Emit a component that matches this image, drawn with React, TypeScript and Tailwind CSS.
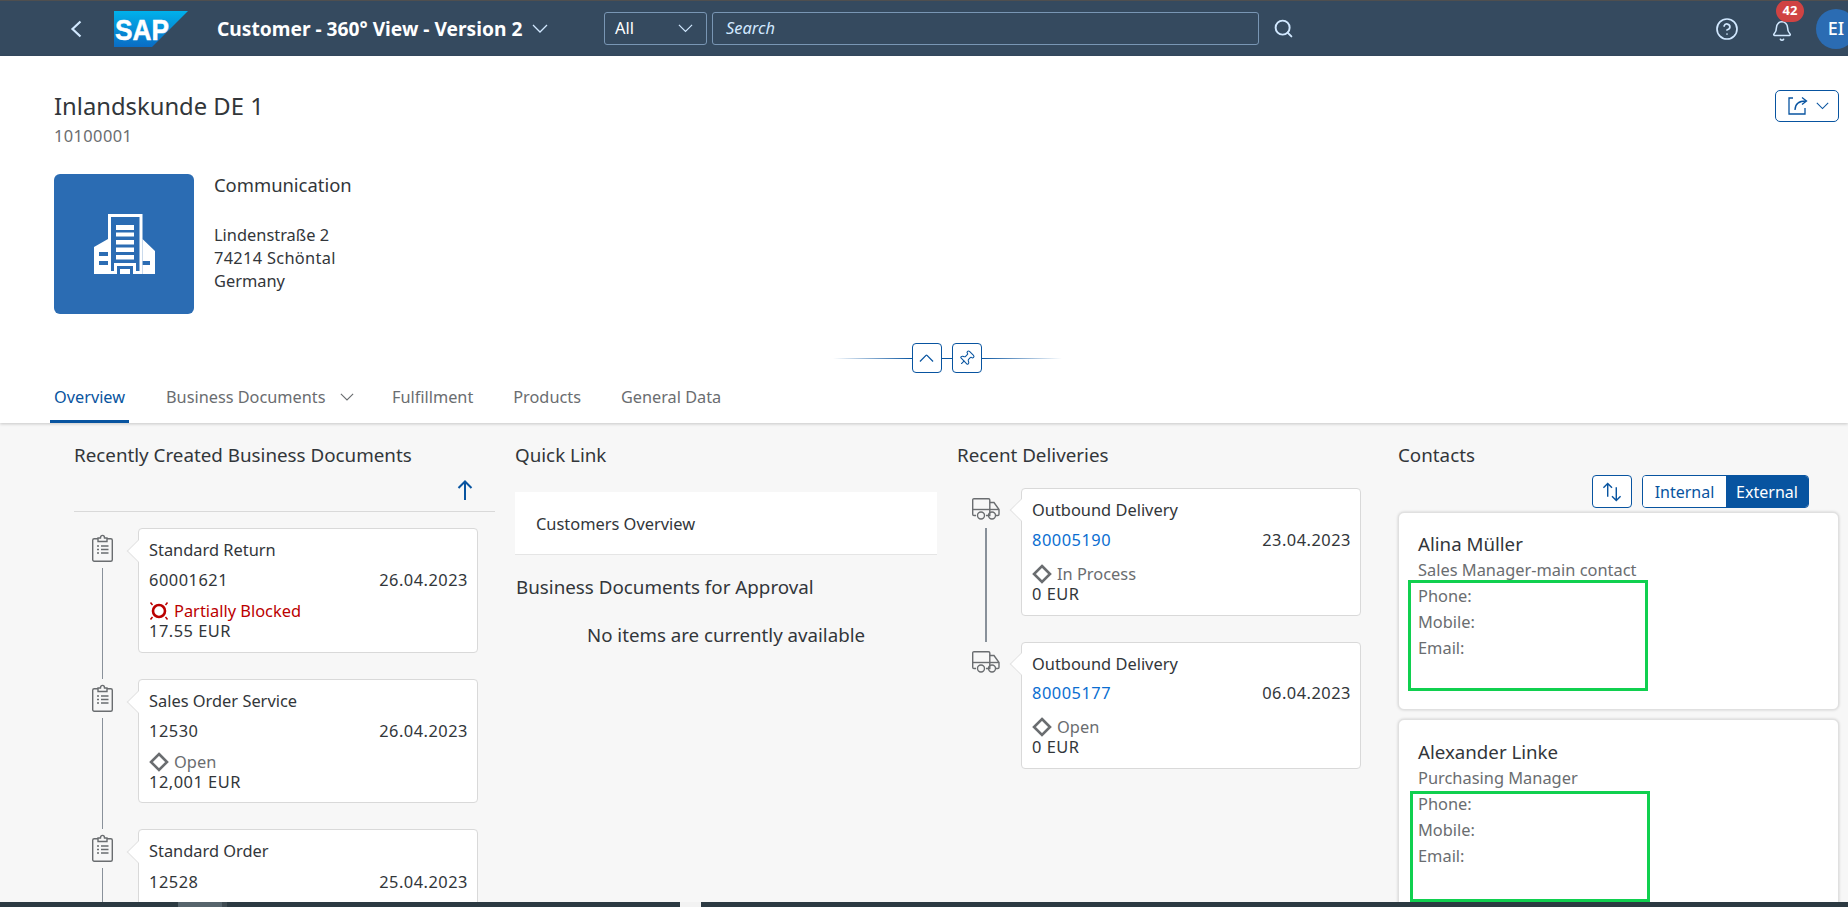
import { CircleHelp, Bell, Pin, Search } from "lucide-react";
import type { ReactNode } from "react";

function Caret({ className }: { className: string }) {
  return (
    <svg viewBox="0 0 16 9" fill="none" stroke="currentColor" strokeWidth="1.300" className={className}>
      <path d="M1 1l7 7 7-7" />
    </svg>
  );
}

function SapLogo() {
  return (
    <svg width="74" height="36" viewBox="0 0 74 36" className="ml-[32px] shrink-0">
      <defs>
        <linearGradient id="sapFill" x1="0" y1="0" x2="0" y2="1">
          <stop offset="0" stopColor="#00b1eb" />
          <stop offset="1" stopColor="#0a6cc4" />
        </linearGradient>
      </defs>
      <polygon points="0,0 74,0 38,36 0,36" fill="url(#sapFill)" />
      <text
        x="1"
        y="29"
        fill="#ffffff"
        stroke="#ffffff"
        strokeWidth=".5"
        fontFamily="'Liberation Sans', sans-serif"
        fontWeight="700"
        fontSize="30"
        textLength="54"
        lengthAdjust="spacingAndGlyphs"
      >
        SAP
      </text>
    </svg>
  );
}

function BuildingIcon() {
  return (
    <svg width="61" height="60" viewBox="0 0 61 60" fill="#ffffff">
      <path d="M14 0h34.500v60H39V52H23v8h-9zM17 3v54h3V49h22v8h3.500V3z" fillRule="evenodd" />
      <rect x="22" y="11" width="18" height="5" />
      <rect x="22" y="18.500" width="18" height="4" />
      <rect x="22" y="26" width="18" height="4.500" />
      <rect x="22" y="33.500" width="18" height="4.500" />
      <rect x="22" y="41" width="18" height="4.500" />
      <path d="M26 55h10v5H26z" />
      <path d="M14 25 0 33v27h14V51H5v-4h9v-5H5v-4h9z" />
      <path d="M48.500 25 61 37v23H48.500v-9H56v-4h-7.500z" />
    </svg>
  );
}

function ShareIcon() {
  return (
    <svg width="20" height="18" viewBox="0 0 20 18" fill="none" stroke="#0854a0" strokeWidth="1.300">
      <path d="M5 1H1v16h16v-6" />
      <path d="M7 13C7 7 11 4 18 4" />
      <path d="M14 .5 18.500 4 14 7.500" />
    </svg>
  );
}

function SortIcon() {
  return (
    <svg width="20" height="20" viewBox="0 0 21 20" fill="none" stroke="#0854a0" strokeWidth="1.500">
      <path d="M6 1v14M1.500 5.500 6 1l4.500 4.500" />
      <path d="M15 5v14M10.500 14.500 15 19l4.500-4.500" />
    </svg>
  );
}

function ClipboardIcon() {
  return (
    <svg width="21" height="28" viewBox="0 0 21 28" fill="none" stroke="#6a6d70" strokeWidth="1.400" className="shrink-0">
      <rect x=".7" y="4.700" width="19.600" height="22.600" rx="1.500" />
      <path d="M6 7.500V4h2.500c0-3.500 4-3.500 4 0H15v3.500z" fill="#f7f7f7" />
      <path d="M9 12h7.500M9 15.500h7.500M9 19h7.500" />
      <path d="M5 12h2M5 15.500h2M5 19h2" />
    </svg>
  );
}

function TruckIcon() {
  return (
    <svg width="28" height="22" viewBox="0 0 28 22" fill="none" stroke="#6a6d70" strokeWidth="1.400" className="shrink-0">
      <path d="M4 17.500H2a1.300 1.300 0 0 1-1.300-1.300V2A1.300 1.300 0 0 1 2 .7h14.500c.7 0 1.300.6 1.300 1.300v15.500H14" />
      <path d="M.7 11.500h17.100" />
      <path d="M17.800 4.500h4.200l5 7v4.700a1.300 1.300 0 0 1-1.300 1.300H24" />
      <path d="M17.800 11.500H27" />
      <circle cx="9" cy="17.500" r="3.500" />
      <circle cx="20" cy="17.500" r="3.500" />
    </svg>
  );
}

function BlockedIcon() {
  return (
    <svg width="20" height="20" viewBox="0 0 20 20" fill="none" stroke="#bb0000" className="shrink-0">
      <circle cx="10" cy="10" r="6" strokeWidth="2.600" />
      <path d="M1.500 1.500 3.500 4M18.500 1.500 16.500 4M1.500 18.500 3.500 16M18.500 18.500 16.500 16" strokeWidth="1.500" />
    </svg>
  );
}

function DiamondIcon() {
  return (
    <svg width="20" height="20" viewBox="0 0 20 20" fill="none" stroke="#6a6d70" strokeWidth="2.600" className="shrink-0">
      <path d="M10 2 18 10 10 18 2 10z" />
    </svg>
  );
}

function StatusLine({ blocked, text }: { blocked?: boolean; text: string }) {
  return (
    <div className={blocked ? "flex h-5 items-center gap-[5px] text-[#bb0000]" : "flex h-5 items-center gap-[5px] text-[#6a6d70]"}>
      {blocked ? <BlockedIcon /> : <DiamondIcon />}
      <span>{text}</span>
    </div>
  );
}

function FlowCard(props: {
  title: string;
  number: string;
  date: string;
  link?: boolean;
  blocked?: boolean;
  status?: string;
  amount?: string;
  arrowClass: string;
  rowClass: string;
  statusClass: string;
}) {
  return (
    <div className="relative flex-1 rounded-[4px] border border-[#d9d9d9] bg-white pl-[10px] pr-[9px] pt-[9px] text-[16.4px] leading-[20px] text-[#32363a]">
      <span className={props.arrowClass} />
      <div className="relative flex h-6 items-center">{props.title}</div>
      <div className={props.rowClass}>
        <span className={props.link ? "tracking-[0.5px] text-[#0a6ed1]" : "tracking-[0.5px]"}>{props.number}</span>
        <span className="tracking-[0.5px]">{props.date}</span>
      </div>
      {props.status && (
        <div className={props.statusClass}>
          <StatusLine blocked={props.blocked} text={props.status} />
          <div className="h-5 tracking-[0.5px]">{props.amount}</div>
        </div>
      )}
    </div>
  );
}

function ColumnHeading({ children }: { children: ReactNode }) {
  return <h2 className="h-6 text-[18.8px] leading-[24px] text-[#32363a]">{children}</h2>;
}

function Documents() {
  const arrow = "absolute left-[-9px] top-[14px] size-4 rotate-45 border-b border-l border-[#e3e3e3] bg-white";
  return (
    <div className="mt-4 flex flex-col">
      <div className="flex h-[151px]">
        <div className="flex w-[64px] flex-col pl-[18px] pt-[6px]">
          <ClipboardIcon />
          <div className="ml-[10px] mt-[6px] w-px flex-1 bg-[#89919a]" />
        </div>
        <div className="flex w-[340px] flex-col pb-[26px]">
          <FlowCard
            title="Standard Return"
            number="60001621"
            date="26.04.2023"
            blocked
            status="Partially Blocked"
            amount="17.55 EUR"
            arrowClass={arrow}
            rowClass="relative mt-[6px] flex h-6 items-center justify-between"
            statusClass="relative mt-[9px]"
          />
        </div>
      </div>
      <div className="flex h-[150px]">
        <div className="flex w-[64px] flex-col pl-[18px] pt-[5px]">
          <ClipboardIcon />
          <div className="ml-[10px] mt-[6px] w-px flex-1 bg-[#89919a]" />
        </div>
        <div className="flex w-[340px] flex-col pb-[26px]">
          <FlowCard
            title="Sales Order Service"
            number="12530"
            date="26.04.2023"
            status="Open"
            amount="12,001 EUR"
            arrowClass={arrow}
            rowClass="relative mt-[6px] flex h-6 items-center justify-between"
            statusClass="relative mt-[9px]"
          />
        </div>
      </div>
      <div className="flex h-[100px]">
        <div className="flex w-[64px] flex-col pl-[18px] pt-[5px]">
          <ClipboardIcon />
          <div className="ml-[10px] mt-[6px] w-px flex-1 bg-[#89919a]" />
        </div>
        <div className="flex w-[340px] flex-col">
          <FlowCard
            title="Standard Order"
            number="12528"
            date="25.04.2023"
            arrowClass={arrow}
            rowClass="relative mt-[7px] flex h-6 items-center justify-between"
            statusClass="relative mt-[9px]"
          />
        </div>
      </div>
    </div>
  );
}

function Deliveries() {
  const arrow = "absolute left-[-9px] top-[13px] size-4 rotate-45 border-b border-l border-[#e3e3e3] bg-white";
  return (
    <div className="mt-[21px] flex flex-col">
      <div className="flex h-[154px]">
        <div className="flex w-[64px] flex-col pl-[15px] pt-[10px]">
          <TruckIcon />
          <div className="ml-[13px] mt-[8px] w-[2px] flex-1 bg-[#89919a]" />
        </div>
        <div className="flex w-[340px] flex-col pb-[26px]">
          <FlowCard
            title="Outbound Delivery"
            number="80005190"
            date="23.04.2023"
            link
            status="In Process"
            amount="0 EUR"
            arrowClass={arrow}
            rowClass="relative mt-[6px] flex h-6 items-center justify-between"
            statusClass="relative mt-[12px]"
          />
        </div>
      </div>
      <div className="flex h-[127px]">
        <div className="flex w-[64px] flex-col pl-[15px] pt-[9px]">
          <TruckIcon />
        </div>
        <div className="flex w-[340px] flex-col">
          <FlowCard
            title="Outbound Delivery"
            number="80005177"
            date="06.04.2023"
            link
            status="Open"
            amount="0 EUR"
            arrowClass={arrow}
            rowClass="relative mt-[5px] flex h-6 items-center justify-between"
            statusClass="relative mt-[12px]"
          />
        </div>
      </div>
    </div>
  );
}

function ContactCard({ name, role, cardClass, markClass }: { name: string; role: string; cardClass: string; markClass: string }) {
  return (
    <div className={cardClass}>
      <div className="h-[26px] text-[18.7px] leading-[26px] text-[#32363a]">{name}</div>
      <div className="h-[26px] text-[16.4px] leading-[26px] text-[#6a6d70]">{role}</div>
      <div className="h-[26px] text-[16.4px] leading-[26px] text-[#6a6d70]">Phone:</div>
      <div className="h-[26px] text-[16.4px] leading-[26px] text-[#6a6d70]">Mobile:</div>
      <div className="h-[26px] text-[16.4px] leading-[26px] text-[#6a6d70]">Email:</div>
      <div className={markClass} />
    </div>
  );
}

export default function App() {
  return (
    <div className="flex h-[907px] w-[1848px] flex-col overflow-hidden bg-white font-['Noto_Sans',sans-serif]">
      <header className="flex h-14 shrink-0 items-center overflow-hidden border-t border-[#4f4f4f] bg-[#354a5f] pl-[70px]">
        <svg width="12" height="18" viewBox="0 0 12 18" fill="none" stroke="#d1e8ff" strokeWidth="2.200" className="shrink-0">
          <path d="M10.500 1.500 2.500 9l8 7.500" />
        </svg>
        <SapLogo />
        <div className="ml-[29px] flex w-[387px] shrink-0 items-center">
          <span className="text-[19.2px] font-bold leading-6 text-white">Customer - 360° View - Version 2</span>
          <Caret className="ml-[10px] w-[16px] text-[#d1e8ff]" />
        </div>
        <div className="flex h-[33px] w-[103px] shrink-0 items-center justify-between rounded-[3px] border border-[#7996b4] pl-[10px] pr-[13px] text-[16.4px] text-white">
          <span>All</span>
          <Caret className="w-[15px] text-[#d1e8ff]" />
        </div>
        <div className="ml-[5px] flex h-[33px] w-[547px] shrink-0 items-center rounded-[3px] border border-[#7996b4] pl-[13px] text-[16.4px] italic text-[#d1e8ff]">
          Search
        </div>
        <Search size={21} strokeWidth={2.2} className="ml-[14px] shrink-0 text-[#d1e8ff]" />
        <CircleHelp size={24} strokeWidth={1.7} className="ml-[421px] shrink-0 text-[#d1e8ff]" />
        <div className="relative ml-[32px] mt-[4px] shrink-0">
          <Bell size={22} strokeWidth={1.7} className="text-[#d1e8ff]" />
          <span className="absolute left-[5px] top-[-20px] flex h-[22px] w-[28px] items-center justify-center rounded-[11px] bg-[#d04343] text-[13px] font-bold text-white">
            42
          </span>
        </div>
        <div className="ml-[23px] flex size-10 shrink-0 items-center justify-center rounded-full bg-[#2b6cb3] text-[18px] font-medium text-white">
          EI
        </div>
      </header>

      <section className="relative z-10 h-[367px] shrink-0 bg-white pt-[34px] shadow-[0_1px_3px_rgba(0,0,0,0.2)]">
        <div className="flex justify-between pl-[54px] pr-[9px]">
          <div>
            <h1 className="h-[33px] text-[23.800px] leading-[33px] text-[#32363a]">Inlandskunde DE 1</h1>
            <div className="h-6 pt-[1px] text-[16.4px] leading-6 tracking-[0.4px] text-[#6a6d70]">10100001</div>
          </div>
          <button className="flex h-8 w-16 items-center justify-center gap-[8px] rounded-[5px] border border-[#0854a0] pl-[2px]">
            <ShareIcon />
            <Caret className="w-[13px] text-[#0854a0]" />
          </button>
        </div>

        <div className="mt-[27px] flex pl-[54px]">
          <div className="flex size-[140px] items-center justify-center rounded-[6px] bg-[#2b6cb3]">
            <BuildingIcon />
          </div>
          <div className="ml-[20px]">
            <div className="h-[23px] text-[18.4px] leading-[22px] text-[#32363a]">Communication</div>
            <div className="mt-[26px] text-[16.4px] leading-[23px] text-[#32363a]">
              <div>Lindenstraße 2</div>
              <div className="tracking-[0.3px]">74214 Schöntal</div>
              <div>Germany</div>
            </div>
          </div>
        </div>

        <div className="mt-[29px] flex h-[30px] items-center justify-center pl-[46px]">
          <div className="h-px w-[79px] bg-gradient-to-r from-transparent to-[#0854a0]" />
          <button className="flex h-[30px] w-[30px] items-center justify-center rounded-[4px] border border-[#0854a0]">
            <Caret className="w-[15px] rotate-180 text-[#0854a0]" />
          </button>
          <div className="h-px w-[10px] bg-[#0854a0]" />
          <button className="flex h-[30px] w-[30px] items-center justify-center rounded-[4px] border border-[#0854a0]">
            <Pin size={17} strokeWidth={1.5} className="rotate-45 text-[#0854a0]" />
          </button>
          <div className="h-px w-[80px] bg-gradient-to-r from-[#0854a0] to-transparent" />
        </div>

        <nav className="flex h-[50px] pl-[50px] text-[16.3px] text-[#6a6d70]">
          <div className="flex h-full w-[79px] items-center justify-center border-b-[3px] border-[#0854a0] pt-[1px] text-[#0854a0]">Overview</div>
          <div className="ml-[37px] flex h-full items-center pb-[2px]">
            <span className="w-[160px]">Business Documents</span>
            <Caret className="ml-[14px] w-[14px]" />
          </div>
          <div className="ml-[38px] flex h-full items-center pb-[2px]">Fulfillment</div>
          <div className="ml-[40px] flex h-full items-center pb-[2px]">Products</div>
          <div className="ml-[40px] flex h-full items-center pb-[2px]">General Data</div>
        </nav>
      </section>

      <main className="flex min-h-0 flex-1 gap-5 overflow-hidden bg-[#f7f7f7] pl-[74px] pt-5">
        <div className="w-[421px] shrink-0">
          <ColumnHeading>Recently Created Business Documents</ColumnHeading>
          <div className="flex h-[45px] items-center justify-end border-b border-[#d9d9d9] pr-[22px] pt-[1px]">
            <svg width="16" height="20" viewBox="0 0 16 20" fill="none" stroke="#0854a0" strokeWidth="2">
              <path d="M8 20V1.500M1.500 8 8 1.500 14.500 8" />
            </svg>
          </div>
          <Documents />
        </div>

        <div className="w-[422px] shrink-0">
          <ColumnHeading>Quick Link</ColumnHeading>
          <div className="mt-[25px] flex h-[63px] items-center border-b border-[#e5e5e5] bg-white pl-[21px] pt-[2px] text-[16.4px] text-[#32363a]">
            Customers Overview
          </div>
          <div className="mt-5 pl-[1px]">
            <ColumnHeading>Business Documents for Approval</ColumnHeading>
          </div>
          <div className="mt-[24px] text-center text-[18.7px] leading-6 text-[#32363a]">No items are currently available</div>
        </div>

        <div className="w-[404px] shrink-0">
          <ColumnHeading>Recent Deliveries</ColumnHeading>
          <Deliveries />
        </div>

        <div className="ml-[17px] w-[441px] shrink-0">
          <ColumnHeading>Contacts</ColumnHeading>
          <div className="mt-2 flex justify-end gap-[10px] pr-[30px]">
            <button className="flex h-[33px] w-10 items-center justify-center rounded-[4px] border border-[#0854a0] bg-white">
              <SortIcon />
            </button>
            <div className="flex h-[33px] w-[167px] overflow-hidden rounded-[4px] border border-[#0854a0] text-[16px]">
              <div className="flex w-[83px] items-center justify-center bg-white text-[#0854a0]">Internal</div>
              <div className="flex flex-1 items-center justify-center bg-[#0854a0] text-white">External</div>
            </div>
          </div>
          <div className="mt-1 flex flex-col gap-[9px]">
            <ContactCard
              name="Alina Müller"
              role="Sales Manager-main contact"
              cardClass="relative h-[198px] shrink-0 rounded-[6px] border border-[#e0e0e0] bg-white pl-[19px] pt-[18px] shadow-[0_0_3px_rgba(0,0,0,0.18)]"
              markClass="absolute left-[9px] top-[67px] h-[111px] w-[240px] border-[3px] border-[#10d04f]"
            />
            <ContactCard
              name="Alexander Linke"
              role="Purchasing Manager"
              cardClass="relative h-[198px] shrink-0 rounded-[6px] border border-[#e0e0e0] bg-white pl-[19px] pt-[19px] shadow-[0_0_3px_rgba(0,0,0,0.18)]"
              markClass="absolute left-[11px] top-[71px] h-[111px] w-[240px] border-[3px] border-[#10d04f]"
            />
          </div>
        </div>
      </main>

      <div className="flex h-[5px] shrink-0 bg-[#2c3a42]">
        <div className="w-[178px]" />
        <div className="w-[44px] bg-[#56646c]" />
        <div className="w-[5px] bg-[#3f4b52]" />
        <div className="w-[453px]" />
        <div className="w-[21px] bg-[#f2f2f2]" />
      </div>
    </div>
  );
}
